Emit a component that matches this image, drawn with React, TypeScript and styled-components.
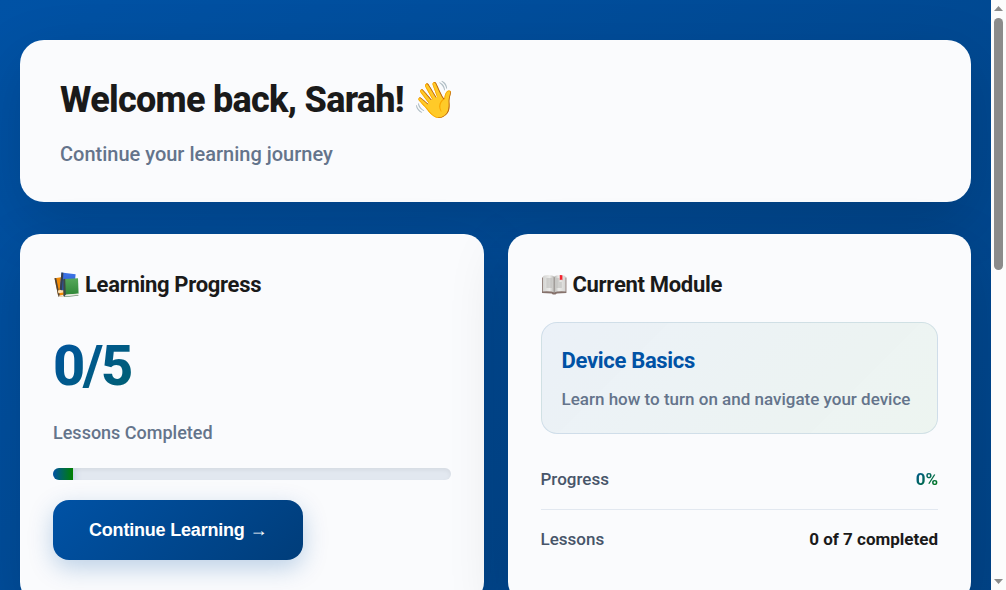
import React from "react";
import styled, { createGlobalStyle, css } from "styled-components";

const BRAND = "#0052a5";
const SUCCESS = "#008000";

const GlobalStyle = createGlobalStyle`
  *, *::before, *::after { box-sizing: border-box; }
  body {
    margin: 0;
    font-family: Roboto, "Noto Color Emoji", sans-serif;
    color: #1a1a1a;
  }
  h1, h2, h3, p, dl, dd { margin: 0; }
`;

const Shell = styled.div`
  display: flex;
  height: 100vh;
  overflow: hidden;
`;

const Page = styled.main`
  flex: 1;
  min-width: 0;
  padding: 40px 20px;
  overflow: hidden;
  background: linear-gradient(135deg, ${BRAND} 0%, #003d7a 100%) 0 0 / 100% 223vh;
`;

const Content = styled.div`
  display: flex;
  flex-direction: column;
  gap: 32px;
  max-width: 1200px;
  margin: 0 auto;
`;

const surface = css`
  background: rgba(255, 255, 255, 0.98);
  box-shadow: 0 20px 60px rgba(0, 0, 0, 0.15);
`;

const Welcome = styled.header`
  ${surface}
  display: flex;
  flex-direction: column;
  gap: 10px;
  padding: 32px 40px;
  border-radius: 24px;
`;

const Title = styled.h1`
  font-size: 36px;
  line-height: 56px;
  font-weight: 800;
  letter-spacing: -0.02em;
`;

const Subtitle = styled.p`
  font-size: 20px;
  line-height: 32px;
  font-weight: 500;
  color: #64748b;
`;

const CardGrid = styled.div`
  display: grid;
  grid-template-columns: repeat(auto-fit, minmax(350px, 1fr));
  gap: 24px;
`;

const Card = styled.section`
  ${surface}
  padding: 32px;
  border: 1px solid rgba(255, 255, 255, 0.3);
  border-radius: 20px;
`;

const CardTitle = styled.h2`
  display: flex;
  align-items: center;
  gap: 6px;
  margin-bottom: 20px;
  font-size: 22px;
  line-height: 35px;
  font-weight: 700;
  letter-spacing: -0.014em;
`;

const gradientText = css`
  background: linear-gradient(135deg, ${BRAND}, ${SUCCESS});
  background-clip: text;
  color: transparent;
`;

const BigNumber = styled.p`
  ${gradientText}
  font-size: 56px;
  line-height: 88px;
  font-weight: 800;
  letter-spacing: -0.04em;
`;

const StatLabel = styled.p`
  margin: 8px 0 20px;
  font-size: 18px;
  line-height: 30px;
  font-weight: 500;
  color: #64748b;
`;

const Track = styled.div`
  height: 12px;
  margin-bottom: 20px;
  overflow: hidden;
  border-radius: 6px;
  background: #e2e8f0;
  box-shadow: inset 0 2px 4px rgba(0, 0, 0, 0.06);
`;

const Fill = styled.div`
  height: 100%;
  background: linear-gradient(90deg, ${BRAND}, ${SUCCESS});
  box-shadow: 0 2px 8px rgba(0, 82, 165, 0.3);
`;

const PrimaryButton = styled.button`
  display: block;
  min-height: 60px;
  padding: 16px 36px;
  border: 0;
  border-radius: 16px;
  background: linear-gradient(135deg, ${BRAND} 0%, #003d7a 100%);
  box-shadow: 0 8px 24px rgba(0, 82, 165, 0.25);
  color: #fff;
  font-family: "Liberation Sans", Arial, sans-serif;
  font-size: 18px;
  font-weight: 600;
  letter-spacing: -0.011em;
  cursor: pointer;
`;

const ModuleBox = styled.div`
  margin-bottom: 16px;
  padding: 20px;
  border: 1px solid rgba(0, 82, 140, 0.12);
  border-radius: 16px;
  background: linear-gradient(135deg, rgba(0, 82, 165, 0.06), rgba(0, 128, 0, 0.05));
`;

const ModuleName = styled.h3`
  margin-bottom: 8px;
  font-size: 22px;
  line-height: 35px;
  font-weight: 700;
  letter-spacing: -0.014em;
  color: ${BRAND};
`;

const ModuleText = styled.p`
  font-size: 17px;
  line-height: 27px;
  font-weight: 500;
  color: #64748b;
`;

const StatRow = styled.div`
  display: flex;
  justify-content: space-between;
  padding: 16px 0;
  font-size: 17px;
  line-height: 27px;

  &:not(:last-child) {
    border-bottom: 1px solid #e2e8f0;
  }
`;

const StatName = styled.dt`
  font-weight: 500;
  color: #475569;
`;

const StatValue = styled.dd<{ $gradient?: boolean }>`
  font-weight: 700;
  ${(p) => p.$gradient && gradientText}
`;

const Scrollbar = styled.div`
  display: flex;
  flex-direction: column;
  align-items: center;
  flex: none;
  width: 15px;
  padding: 6px 0;
  background: #fcfcfc;
`;

const ScrollTrack = styled.div`
  flex: 1;
  margin: 7px 0;
`;

const ScrollThumb = styled.div`
  width: 9px;
  height: 252px;
  border-radius: 5px;
  background: #8b8b8b;
`;

function Arrow({ down }: { down?: boolean }) {
  return (
    <svg width="9" height="5" viewBox="0 0 9 5" fill="#8b8b8b">
      <path d={down ? "M0 0H9L4.5 5Z" : "M0 5H9L4.5 0Z"} />
    </svg>
  );
}

function BooksIcon() {
  return (
    <svg width="26" height="26" viewBox="0 0 26 26" role="img" aria-label="Books">
      <defs>
        <linearGradient id="bookGreen" x1="0" y1="0" x2="0" y2="1">
          <stop offset="0" stopColor="#56a85a" />
          <stop offset="1" stopColor="#2f8737" />
        </linearGradient>
        <linearGradient id="bookBlue" x1="0" y1="0" x2="0" y2="1">
          <stop offset="0" stopColor="#3d74e8" />
          <stop offset="1" stopColor="#2757c4" />
        </linearGradient>
      </defs>
      <path d="M1.5 6.2L8 5.2L11.4 24L5.4 25Z" fill="#f08a08" />
      <path d="M1.5 6.2L3.2 5.9L7 24.7L5.4 25Z" fill="#4b4238" />
      <path d="M4.8 18.4L9.6 17.6L10.2 20.4L5.4 21.2Z" fill="#ffe0b0" />
      <path d="M5.4 23.8L10.8 22.8L11.2 24L5.6 25.1Z" fill="#eceae4" />
      <path d="M8.4 0.6L22.6 2.2L21 20.4L6.8 17.6Z" fill="url(#bookBlue)" />
      <path d="M8.4 0.6L10.4 0.8L9.2 18.4L6.8 17.6Z" fill="#34404f" />
      <path d="M11 7L25 6.2L25.6 21.8L11.4 23Z" fill="url(#bookGreen)" />
      <path d="M11.4 22.8L25.6 21.6L25.2 23.4L11.4 24.6Z" fill="#e8e8df" />
      <path d="M10.8 24.4L25.4 23.2V23.8L10.8 25Z" fill="#3d6741" />
      <path d="M10.2 7.2L12.2 6.8L12.8 22.6L11.2 24.8L10.4 23.6Z" fill="#3d4944" />
    </svg>
  );
}

function OpenBookIcon() {
  return (
    <svg width="26" height="26" viewBox="0 0 26 26" role="img" aria-label="Open book">
      <defs>
        <linearGradient id="pageLeft" x1="0" y1="0" x2="1" y2="0">
          <stop offset="0" stopColor="#d3d3d1" />
          <stop offset="0.6" stopColor="#ececea" />
          <stop offset="1" stopColor="#b9b8b5" />
        </linearGradient>
        <linearGradient id="pageRight" x1="1" y1="0" x2="0" y2="0">
          <stop offset="0" stopColor="#d3d3d1" />
          <stop offset="0.6" stopColor="#ececea" />
          <stop offset="1" stopColor="#b9b8b5" />
        </linearGradient>
      </defs>
      <path d="M1 5.4H25.4V21L15.8 21.4Q14.4 22.6 13.2 22.6Q11.8 22.6 10.6 21.4L1 21Z" fill="#85716b" />
      <path d="M1.8 4.8Q2.2 3 7.2 3Q11.8 3 13.2 4.8V20.6Q10.4 18.8 1.8 19.4Z" fill="url(#pageLeft)" />
      <path d="M24.6 4.8Q24.2 3 19 3Q14.6 3 13.2 4.8V20.6Q15.8 18.8 24.6 19.4Z" fill="url(#pageRight)" />
      <path d="M13.2 4.8V20.6" stroke="#918c88" strokeWidth="0.7" />
      <path
        d="M5.4 7H10.8M5.4 9H10.8M5.4 11H10.8M5.4 13H10.8M5.4 15H10.8M15.4 7H18.4M15.4 9H18.4M15.4 11H20.8M15.4 13H20.8M15.4 15H20.8"
        stroke="#a9a9a7"
        strokeWidth="0.8"
      />
      <path d="M18.8 3L21.4 3.2V8.2L20.1 7.6L18.8 8.2Z" fill="#f5232e" />
    </svg>
  );
}

export default function App() {
  const progress = 5;

  return (
    <Shell>
      <GlobalStyle />
      <Page>
        <Content>
          <Welcome>
            <Title>Welcome back, Sarah! 👋</Title>
            <Subtitle>Continue your learning journey</Subtitle>
          </Welcome>
          <CardGrid>
            <Card>
              <CardTitle>
                <BooksIcon />
                Learning Progress
              </CardTitle>
              <BigNumber>0/5</BigNumber>
              <StatLabel>Lessons Completed</StatLabel>
              <Track role="progressbar" aria-label="Lessons Completed" aria-valuenow={progress}>
                <Fill style={{ width: `${progress}%` }} />
              </Track>
              <PrimaryButton type="button">Continue Learning →</PrimaryButton>
            </Card>
            <Card>
              <CardTitle>
                <OpenBookIcon />
                Current Module
              </CardTitle>
              <ModuleBox>
                <ModuleName>Device Basics</ModuleName>
                <ModuleText>Learn how to turn on and navigate your device</ModuleText>
              </ModuleBox>
              <dl>
                <StatRow>
                  <StatName>Progress</StatName>
                  <StatValue $gradient>0%</StatValue>
                </StatRow>
                <StatRow>
                  <StatName>Lessons</StatName>
                  <StatValue>0 of 7 completed</StatValue>
                </StatRow>
              </dl>
            </Card>
          </CardGrid>
        </Content>
      </Page>
      <Scrollbar aria-hidden="true">
        <Arrow />
        <ScrollTrack>
          <ScrollThumb />
        </ScrollTrack>
        <Arrow down />
      </Scrollbar>
    </Shell>
  );
}
